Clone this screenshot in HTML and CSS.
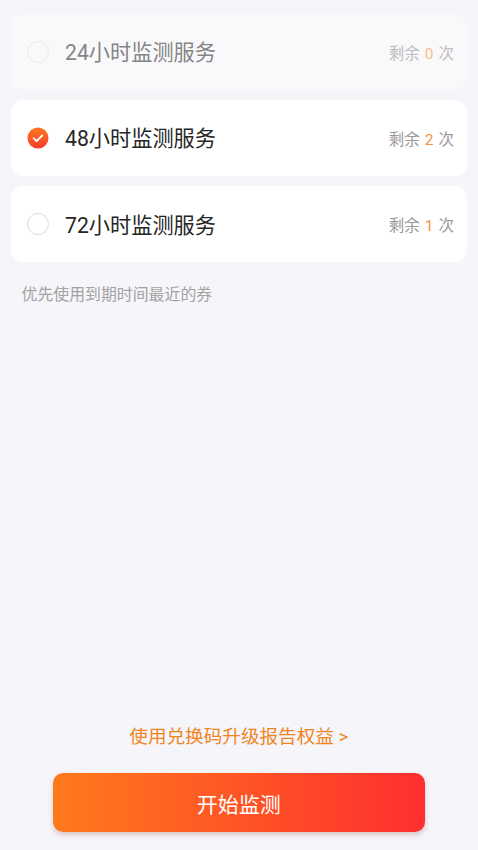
FILE: index.html
```
<!DOCTYPE html>
<html lang="zh-CN">
<head>
<meta charset="utf-8">
<title>监测服务</title>
<link rel="stylesheet" href="styles.css">
</head>
<body>
<main class="page">
  <section class="list">
    <div class="row row-off">
      <span class="radio"></span>
      <span class="name">24小时监测服务</span>
      <span class="left">剩余<b>0</b>次</span>
    </div>
    <div class="row">
      <svg class="check" viewBox="0 0 22 22" aria-hidden="true">
        <defs><linearGradient id="g" x1="0" y1="0" x2="0" y2="1"><stop offset="0" stop-color="#ff7a1f"/><stop offset="1" stop-color="#f53a2f"/></linearGradient></defs>
        <circle cx="11" cy="11" r="10.5" fill="url(#g)"/>
        <path d="M6.6 11.2l3 2.9 5.6-5.6" fill="none" stroke="#fff" stroke-width="1.8" stroke-linecap="round" stroke-linejoin="round"/>
      </svg>
      <span class="name">48小时监测服务</span>
      <span class="left">剩余<b>2</b>次</span>
    </div>
    <div class="row">
      <span class="radio"></span>
      <span class="name">72小时监测服务</span>
      <span class="left">剩余<b>1</b>次</span>
    </div>
  </section>
  <p class="hint">优先使用到期时间最近的券</p>
  <div class="spacer"></div>
  <a class="redeem">使用兑换码升级报告权益 &gt;</a>
  <button class="start">开始监测</button>
</main>
</body>
</html>
```
FILE: styles.css
```
* { box-sizing: border-box; }
html, body { margin: 0; height: 100%; }
body {
  background: #f5f5fa;
  font-family: Roboto, "Noto Sans CJK SC", sans-serif;
}
.page {
  height: 850px;
  display: flex;
  flex-direction: column;
  padding: 13.5px 11px 18px 10.5px;
}
.list { display: flex; flex-direction: column; gap: 10px; }
.row {
  height: 76.3px;
  background: #fff;
  border-radius: 12px;
  display: flex;
  align-items: center;
  padding: 0 13px 0 17px;
}
.row-off { background: #f9f9fc; }
.row-off .name { color: #858585; }
.row-off .left { color: #bdbdbd; }
.row-off .left b { color: #f8bd87; }
.row-off .radio { border-color: #ebebed; background: transparent; }
.radio, .check {
  width: 22px;
  height: 22px;
  flex: none;
  display: block;
  margin-left: -0.5px;
}
.radio {
  border-radius: 50%;
  border: 1.5px solid #dcdcdc;
  background: #fff;
}
.name {
  margin: 3px 0 0 16px;
  font-size: 21.2px;
  line-height: 28px;
  color: #262626;
  flex: 1;
}
.left { font-size: 15.5px; color: #999; }
.left b { margin: 0 5px; font-weight: 400; color: #f5923e; }
.hint {
  margin: 23px 0 0 11px;
  font-size: 15.9px;
  line-height: 20px;
  color: #a3a3a3;
}
.spacer { flex: 1; }
.redeem {
  text-align: center;
  font-size: 18.6px;
  line-height: 24px;
  color: #f0851f;
  margin-bottom: -1px;
}
.start {
  margin: 25px 42.5px 0;
  height: 59px;
  flex: none;
  border: 0;
  border-radius: 10px;
  background: linear-gradient(90deg, #ff7a1c, #ff2f2f);
  box-shadow: 0 3px 5px rgba(150, 80, 60, .28);
  color: #fff;
  font: inherit;
  font-size: 21px;
}
```
